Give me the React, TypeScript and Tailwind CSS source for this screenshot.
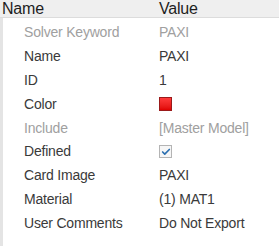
import { Check } from 'lucide-react'

type Row = { label: string; value?: string; kind?: 'color' | 'check'; dim?: boolean }

const rows: Row[] = [
  { label: 'Solver Keyword', value: 'PAXI', dim: true },
  { label: 'Name', value: 'PAXI' },
  { label: 'ID', value: '1' },
  { label: 'Color', kind: 'color' },
  { label: 'Include', value: '[Master Model]', dim: true },
  { label: 'Defined', kind: 'check' },
  { label: 'Card Image', value: 'PAXI' },
  { label: 'Material', value: '(1) MAT1' },
  { label: 'User Comments', value: 'Do Not Export' },
]

export default function App() {
  return (
    <div className="w-[279px] h-[246px] bg-white overflow-hidden font-['Liberation_Sans',Arial,sans-serif] text-[14px] tracking-[-0.2px]">
      {/* header */}
      <div className="flex h-[18px] items-center bg-[#efefef] border-b border-[#dcdcdc] text-[#1e1e1e] text-[16px]">
        <div className="w-[157px] pl-[2px]">Name</div>
        <div className="pl-[2px]">Value</div>
      </div>

      <div className="flex h-[228px]">
        <div className="w-[3px] bg-[#e4e4e4]" />
        <div className="flex-1 pt-[3px]">
          {rows.map(r => (
            <div key={r.label} className="flex h-[23.8px] items-center">
              <div className={`w-[135px] pl-[21px] ${r.dim ? 'text-[#a0a0a0]' : 'text-[#3a3a3a]'}`}>{r.label}</div>
              <div className={`pl-[21px] ${r.dim ? 'text-[#a0a0a0]' : 'text-[#3a3a3a]'}`}>
                {r.kind === 'color' && (
                  <div className="w-[13px] h-[14px] border border-[#9a1a1a] bg-gradient-to-b from-[#ff3a3a] to-[#e00000]" />
                )}
                {r.kind === 'check' && (
                  <div className="w-[13px] h-[13px] border border-[#b4b4b4] bg-[#f6f6f6] flex items-center justify-center">
                    <Check className="w-[10px] h-[10px] text-[#2b6fb0]" strokeWidth={4} />
                  </div>
                )}
                {r.value}
              </div>
            </div>
          ))}
        </div>
      </div>
    </div>
  )
}
